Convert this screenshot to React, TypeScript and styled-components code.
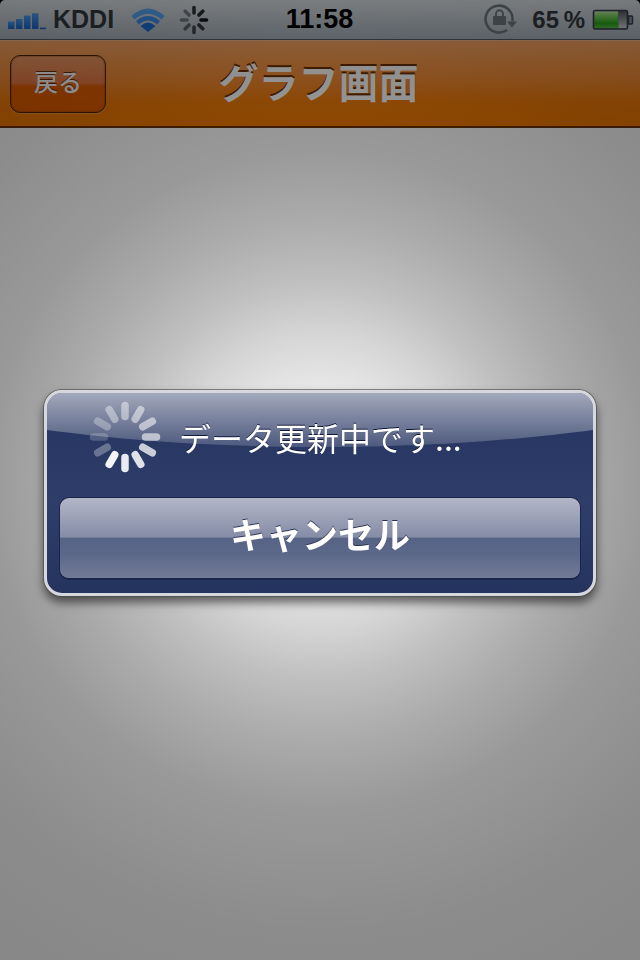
import React from "react";
import styled, { createGlobalStyle } from "styled-components";

const GlobalStyle = createGlobalStyle`
  html, body {
    margin: 0;
    padding: 0;
    background: #000;
  }
`

const Spinner = (props: { size: number, inner: number, outer: number, width: number, color: string, levels: number[] }) => {
    const c = props.size / 2;
    const step = 360 / props.levels.length;
    return (
        <svg width={props.size} height={props.size} viewBox={`0 0 ${props.size} ${props.size}`}>
            {props.levels.map((level, i) => (
                <line
                    key={i}
                    x1={c} y1={c - props.inner} x2={c} y2={c - props.outer}
                    stroke={props.color}
                    strokeOpacity={level}
                    strokeWidth={props.width}
                    strokeLinecap="round"
                    transform={`rotate(${i * step} ${c} ${c})`}
                />
            ))}
        </svg>
    );
};

const SignalIcon = () => (
    <svg width="38" height="24" viewBox="0 0 38 24">
        <defs>
            <linearGradient id="bar" x1="0" y1="0" x2="0" y2="1">
                <stop offset="0" stopColor="#4a9cf0"/>
                <stop offset="1" stopColor="#1a68cc"/>
            </linearGradient>
        </defs>
        <rect x="0" y="13.6" width="6.5" height="7.4" fill="url(#bar)"/>
        <rect x="8" y="11" width="6.5" height="10" fill="url(#bar)"/>
        <rect x="16" y="7.6" width="6.5" height="13.4" fill="url(#bar)"/>
        <rect x="24" y="5.3" width="6.5" height="15.7" fill="url(#bar)"/>
        <rect x="32" y="19.6" width="6" height="1.6" fill="#1a68cc"/>
    </svg>
);

const WifiIcon = () => (
    <svg width="34" height="26" viewBox="0 1 34 26">
        <path d="M.5 10Q17-5 33.5 10L30.5 13.5Q17 2.5 3.5 13.5Z" fill="#55a8f8"/>
        <path d="M5 15Q17 5 29 15L26 18.5Q17 10.5 8 18.5Z" fill="#3c90ee"/>
        <path d="M9.5 20Q17 13 24.5 20L17 26Z" fill="#1f70d8"/>
    </svg>
);

const LockIcon = () => (
    <svg width="36" height="32" viewBox="0 0 36 32">
        <path d="M29.4 17A13.5 13.5 0 1 0 24 26" fill="none" stroke="#707a80" strokeWidth="2.6"/>
        <path d="M24 17.5H34L29 23.5Z" fill="#707a80"/>
        <rect x="10" y="12" width="13" height="9" rx="1" fill="#707a80"/>
        <path d="M13 12V9.8A3.5 3.5 0 0 1 20 9.8V12" fill="none" stroke="#707a80" strokeWidth="1.9"/>
    </svg>
);

const BatteryIcon = () => (
    <svg width="42" height="22" viewBox="0 0 42 22">
        <defs>
            <linearGradient id="charge" x1="0" y1="0" x2="0" y2="1">
                <stop offset="0" stopColor="#c4f0b0"/>
                <stop offset=".25" stopColor="#82dc68"/>
                <stop offset=".72" stopColor="#2aa81a"/>
                <stop offset="1" stopColor="#5cc448"/>
            </linearGradient>
            <linearGradient id="empty" x1="0" y1="0" x2="0" y2="1">
                <stop offset="0" stopColor="#555a62"/>
                <stop offset="1" stopColor="#d4d4da"/>
            </linearGradient>
        </defs>
        <rect x="1.5" y="1.5" width="34" height="18.5" rx="1.5" fill="#555a62" stroke="#3a4050" strokeWidth="1.6"/>
        <rect x="2.4" y="2.4" width="24" height="16.7" fill="url(#charge)"/>
        <rect x="26.4" y="2.4" width="8.2" height="16.7" fill="url(#empty)"/>
        <path d="M36.5 7H39.5A1 1 0 0 1 40.5 8V14A1 1 0 0 1 39.5 15H36.5Z" fill="#8c96a8" stroke="#3a4050" strokeWidth="1.5"/>
    </svg>
);

export default function App() {
    return (
        <Screen>
            <GlobalStyle/>
            <StatusBar>
                <StatusLeft>
                    <SignalIcon/>
                    <Carrier>KDDI</Carrier>
                    <WifiSlot><WifiIcon/></WifiSlot>
                    <Spinner size={30} inner={7} outer={12.5} width={3.6} color="#14171a"
                             levels={[.85, .9, 1, .8, .7, .55, .45, .45]}/>
                </StatusLeft>
                <Clock>11:58</Clock>
                <StatusRight>
                    <LockIcon/>
                    <Percent>65 %</Percent>
                    <BatteryIcon/>
                </StatusRight>
            </StatusBar>
            <NavBar>
                <BackButton>戻る</BackButton>
                <NavTitle>グラフ画面</NavTitle>
            </NavBar>
            <Content/>
            <Dim>
                <Dialog>
                    <Gloss/>
                    <MessageRow>
                        <Spinner size={74} inner={20.5} outer={31.5} width={7.5} color="#fff"
                                 levels={[.45, .5, .55, .6, .75, .85, .9, .95, .3, .2, .3, .4]}/>
                        <Message>データ更新中です...</Message>
                    </MessageRow>
                    <CancelButton>キャンセル</CancelButton>
                </Dialog>
            </Dim>
        </Screen>
    );
}

const Screen = styled.div`
  position: relative;
  display: flex;
  flex-direction: column;
  width: 640px;
  height: 960px;
  overflow: hidden;
  background: #000;
  font-family: "Liberation Sans", "Noto Sans CJK JP", sans-serif;
`

const StatusBar = styled.div`
  display: grid;
  grid-template-columns: 1fr auto 1fr;
  align-items: center;
  flex: none;
  height: 40px;
  padding: 0 6px 0 8px;
  box-sizing: border-box;
  background: linear-gradient(180deg, #e0e6ea 0%, #a9b3bd 100%);
  border-bottom: 1px solid #555c64;
  border-radius: 5px 5px 0 0;
`

const StatusLeft = styled.div`
  display: flex;
  align-items: center;
`

const Carrier = styled.span`
  margin-left: 7px;
  font-size: 25px;
  font-weight: bold;
  color: #34393e;
`

const WifiSlot = styled.div`
  display: flex;
  margin: 0 14px 0 17px;
`

const Clock = styled.span`
  margin-right: 3px;
  font-size: 27px;
  font-weight: bold;
  color: #000;
`

const StatusRight = styled.div`
  display: flex;
  align-items: center;
  justify-content: flex-end;
  gap: 7px;
`

const Percent = styled.span`
  margin-left: 6px;
  font-size: 24px;
  font-weight: bold;
  color: #34393e;
  word-spacing: -2px;
`

const NavBar = styled.div`
  display: grid;
  grid-template-columns: 1fr auto 1fr;
  align-items: center;
  flex: none;
  height: 88px;
  padding: 0 13px 0 10px;
  box-sizing: border-box;
  background: linear-gradient(180deg, #f9a765 0%, #f58c33 45%, #f07c0a 70%, #f07800 100%);
  border-top: 1px solid #fbbb88;
  border-bottom: 2px solid #6a3200;
`

const BackButton = styled.button`
  justify-self: start;
  width: 96px;
  height: 58px;
  padding: 0 0 6px;
  font-family: "Noto Sans CJK JP", sans-serif;
  font-size: 24px;
  font-weight: 500;
  color: #fff;
  text-shadow: 0 -1px 0 #6a2a00;
  background: linear-gradient(180deg, #f09a68 0%, #ea7c42 48%, #e46000 54%, #e25c00 100%);
  border: 1px solid #4a2400;
  border-radius: 10px;
  box-shadow: 0 1px 0 rgba(255, 200, 150, .35), inset 0 0 2px #8a3c00;
`

const NavTitle = styled.h1`
  margin: 0;
  padding-bottom: 6px;
  font-family: "Noto Sans CJK JP", sans-serif;
  font-size: 40px;
  font-weight: 700;
  line-height: 1.2;
  color: #fff;
  text-shadow: 0 -2px 0 #6a3000;
`

const Content = styled.div`
  flex: 1;
  background: #fff;
`

const Dim = styled.div`
  position: absolute;
  inset: 0;
  display: flex;
  align-items: flex-start;
  justify-content: center;
  padding-top: 390px;
  box-sizing: border-box;
  background: radial-gradient(circle at 320px 480px, rgba(0, 0, 0, .03) 0, rgba(0, 0, 0, .1) 100px, rgba(0, 0, 0, .17) 150px, rgba(0, 0, 0, .25) 200px, rgba(0, 0, 0, .33) 260px, rgba(0, 0, 0, .4) 330px, rgba(0, 0, 0, .45) 450px, rgba(0, 0, 0, .47) 577px);
`

const Dialog = styled.div`
  position: relative;
  width: 552px;
  height: 206px;
  padding: 0 12px;
  box-sizing: border-box;
  overflow: hidden;
  background: linear-gradient(180deg, #25335f 0%, #2e3d69 55%, #25335f 100%);
  border: 3px solid #d6d8de;
  border-radius: 18px;
  box-shadow: 0 0 0 1px rgba(70, 70, 70, .6);
  filter: drop-shadow(0 6px 5px rgba(0, 0, 0, .55));
`

const Gloss = styled.div`
  position: absolute;
  left: -277px;
  top: -204px;
  width: 1100px;
  height: 258px;
  border-radius: 50%;
  background: linear-gradient(180deg, rgba(255, 255, 255, .58) 79%, rgba(255, 255, 255, .17) 100%);
`

const MessageRow = styled.div`
  position: relative;
  display: flex;
  align-items: center;
  gap: 17px;
  height: 104px;
  padding: 0 0 16px 29px;
  box-sizing: border-box;
`

const Message = styled.span`
  font-family: "Noto Sans CJK JP", sans-serif;
  font-size: 32px;
  font-weight: 400;
  color: #fff;
  text-shadow: 0 -1px 0 #11193a;
`

const CancelButton = styled.button`
  position: relative;
  display: block;
  width: 522px;
  height: 83px;
  padding: 0 0 10px;
  font-family: "Noto Sans CJK JP", sans-serif;
  font-size: 36px;
  font-weight: 700;
  color: #fff;
  text-shadow: 0 -1px 0 #2a3352;
  background: linear-gradient(180deg, #b2b6c8 0%, #858ca6 49%, #566385 50%, #5c688a 70%, #727b96 100%);
  border: 1px solid #1a2448;
  border-bottom-width: 2px;
  border-radius: 10px;
`
